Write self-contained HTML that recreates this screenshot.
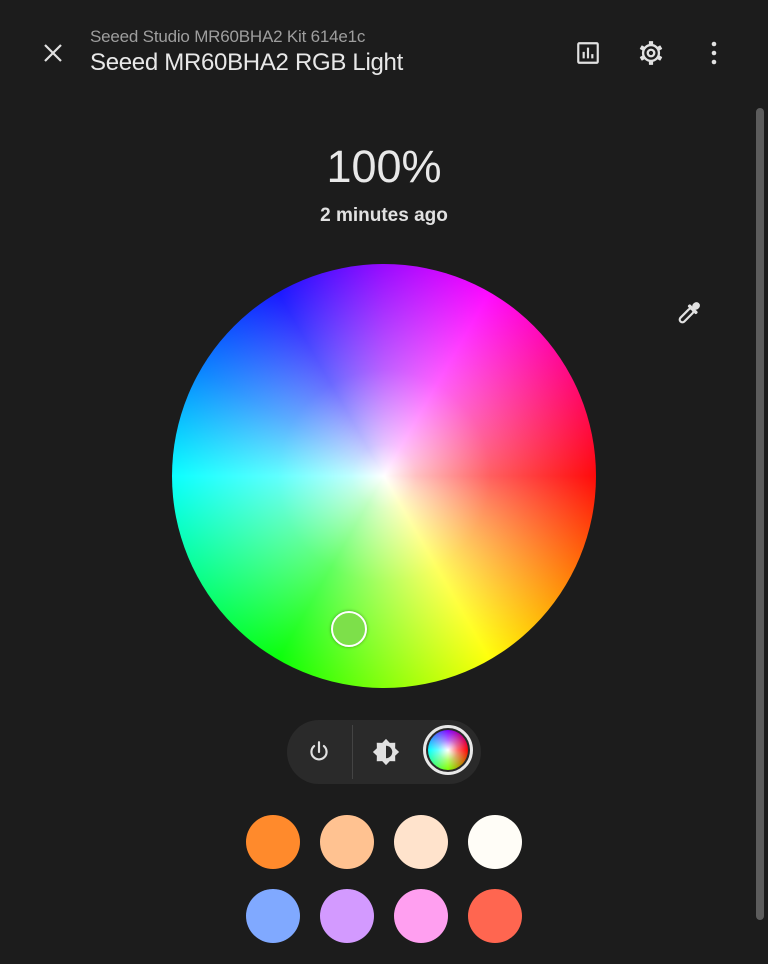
<!DOCTYPE html>
<html><head><style>
html,body{margin:0;padding:0;width:768px;height:964px;background:#1c1c1c;overflow:hidden;font-family:"Liberation Sans",sans-serif;color:#e1e1e1}
.abs{position:absolute}
.wheel{left:172px;top:264px;width:424px;height:424px;border-radius:50%;
background:radial-gradient(circle closest-side,#fff 0%,rgba(255,255,255,.75) 15%,rgba(255,255,255,.35) 50%,rgba(255,255,255,0) 100%),
conic-gradient(from 0deg,hsl(275,100%,52%),hsl(300,100%,52%) 30deg,hsl(330,100%,52%) 60deg,hsl(360,100%,52%) 90deg,hsl(30,100%,52%) 120deg,hsl(60,100%,52%) 150deg,hsl(90,100%,52%) 180deg,hsl(120,100%,52%) 210deg,hsl(150,100%,52%) 240deg,hsl(180,100%,52%) 270deg,hsl(210,100%,52%) 300deg,hsl(240,100%,55%) 330deg,hsl(275,100%,52%) 360deg)}
.dot{width:54px;height:54px;border-radius:50%}
</style></head><body>
<svg class="abs" style="left:41px;top:41px" width="24" height="24" viewBox="0 0 24 24"><path d="M4 4L20 20M20 4L4 20" stroke="#e1e1e1" stroke-width="2.2"/></svg>
<div class="abs" style="left:90px;top:27px;font-size:17px;color:#9e9e9e;letter-spacing:-0.2px">Seeed Studio MR60BHA2 Kit 614e1c</div>
<div class="abs" style="left:90px;top:49px;font-size:24px;color:#e8e8e8;letter-spacing:-0.3px">Seeed MR60BHA2 RGB Light</div>
<svg class="abs" style="left:575px;top:40px" width="26" height="26" viewBox="0 0 24 24"><rect x="3" y="3" width="18" height="18" rx="1" fill="none" stroke="#e1e1e1" stroke-width="2"/><path d="M8 17V11M12 17V7M16 17V13" stroke="#e1e1e1" stroke-width="2"/></svg>
<svg class="abs" style="left:637px;top:39px" width="28" height="28" viewBox="0 0 24 24">
<g fill="#e1e1e1">
<rect x="10.2" y="1.8" width="3.6" height="4" rx=".5"/>
<rect x="10.2" y="1.8" width="3.6" height="4" rx=".5" transform="rotate(60 12 12)"/>
<rect x="10.2" y="1.8" width="3.6" height="4" rx=".5" transform="rotate(120 12 12)"/>
<rect x="10.2" y="1.8" width="3.6" height="4" rx=".5" transform="rotate(180 12 12)"/>
<rect x="10.2" y="1.8" width="3.6" height="4" rx=".5" transform="rotate(240 12 12)"/>
<rect x="10.2" y="1.8" width="3.6" height="4" rx=".5" transform="rotate(300 12 12)"/>
</g>
<circle cx="12" cy="12" r="6.8" fill="none" stroke="#e1e1e1" stroke-width="2"/>
<circle cx="12" cy="12" r="2.8" fill="none" stroke="#e1e1e1" stroke-width="2"/>
</svg>
<svg class="abs" style="left:702px;top:40px" width="24" height="26" viewBox="0 0 24 26"><circle cx="12" cy="4" r="2.3" fill="#e1e1e1"/><circle cx="12" cy="13" r="2.3" fill="#e1e1e1"/><circle cx="12" cy="22" r="2.3" fill="#e1e1e1"/></svg>
<div class="abs" style="left:0;width:768px;top:141px;text-align:center;font-size:45px;color:#e8e8e8">100%</div>
<div class="abs" style="left:0;width:768px;top:205px;text-align:center;font-size:19px;font-weight:bold;color:#e1e1e1">2 minutes ago</div>
<svg class="abs" style="left:674px;top:298px" width="30" height="30" viewBox="0 0 30 30">
<g transform="rotate(45 15 15)">
<rect x="12.3" y="10" width="5.4" height="17" rx="2.7" fill="none" stroke="#e1e1e1" stroke-width="2.2"/>
<rect x="9" y="8" width="12" height="3.4" rx="1.5" fill="#e1e1e1"/>
<rect x="11.5" y="1" width="7" height="8" rx="3.5" fill="#e1e1e1"/>
</g></svg>
<div class="abs wheel"></div>
<div class="abs" style="left:331px;top:611px;width:32px;height:32px;border-radius:50%;border:2px solid #fff;background:#7de04a;box-shadow:0 0 3px rgba(0,0,0,.4)"></div>
<div class="abs" style="left:287px;top:720px;width:194px;height:64px;border-radius:32px;background:#2a2a2a"></div>
<div class="abs" style="left:352px;top:725px;width:1px;height:54px;background:#444"></div>
<svg class="abs" style="left:306px;top:739px" width="26" height="26" viewBox="0 0 24 24"><path d="M12 3V12M7.5 6.5A7 7 0 1 0 16.5 6.5" fill="none" stroke="#e1e1e1" stroke-width="2" stroke-linecap="round"/></svg>
<svg class="abs" style="left:371px;top:737px" width="30" height="30" viewBox="0 0 24 24"><path fill="#e1e1e1" d="M12 1.5L15 4.7 19.4 4.6 19.3 9 22.5 12 19.3 15 19.4 19.4 15 19.3 12 22.5 9 19.3 4.6 19.4 4.7 15 1.5 12 4.7 9 4.6 4.6 9 4.7Z"/><path fill="#2a2a2a" d="M12 7a5 5 0 0 1 0 10z"/></svg>
<div class="abs" style="left:423px;top:725px;width:50px;height:50px;border-radius:50%;border:3px solid #e8e8e8;box-sizing:border-box"></div>
<div class="abs" style="left:428px;top:730px;width:40px;height:40px;border-radius:50%;background:radial-gradient(circle closest-side,#fff 0%,rgba(255,255,255,.4) 50%,rgba(255,255,255,0) 100%),conic-gradient(hsl(270,100%,50%),hsl(0,100%,50%) 90deg,hsl(90,100%,50%) 180deg,hsl(180,100%,50%) 270deg,hsl(270,100%,50%))"></div>
<div class="abs dot" style="left:246px;top:815px;background:#ff8a2c"></div>
<div class="abs dot" style="left:320px;top:815px;background:#ffc291"></div>
<div class="abs dot" style="left:394px;top:815px;background:#ffe3cc"></div>
<div class="abs dot" style="left:468px;top:815px;background:#fffdf7"></div>
<div class="abs dot" style="left:246px;top:889px;background:#80a9ff"></div>
<div class="abs dot" style="left:320px;top:889px;background:#d39aff"></div>
<div class="abs dot" style="left:394px;top:889px;background:#ff9ff0"></div>
<div class="abs dot" style="left:468px;top:889px;background:#ff6650"></div>
<div class="abs" style="left:756px;top:108px;width:8px;height:812px;background:#5c5c5c;border-radius:4px"></div>
</body></html>
